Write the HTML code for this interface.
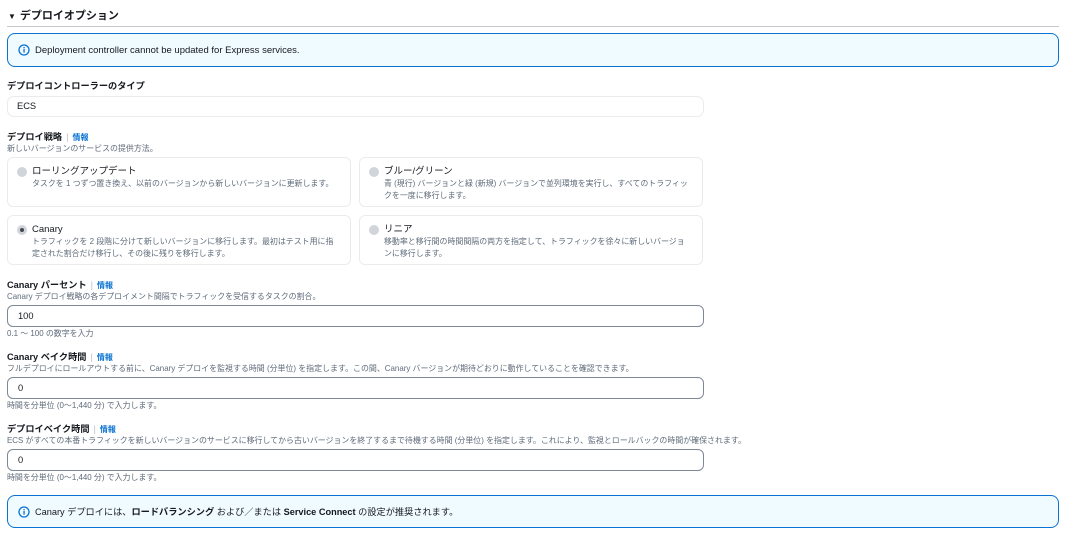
<!DOCTYPE html>
<html><head><meta charset="utf-8"><style>
*{box-sizing:border-box;margin:0;padding:0}
body{width:1070px;height:540px;background:#fff;font-family:"Liberation Sans","Noto Sans CJK JP",sans-serif;color:#16191f;position:relative;overflow:hidden}
.a{position:absolute;white-space:nowrap}
.h{font-size:11px;font-weight:bold;line-height:14px}
.lbl{font-size:9.2px;font-weight:bold;line-height:12px}
.info{color:#0972d3;font-weight:bold;font-size:8px}
.sep{color:#b6bec9;font-weight:normal;margin:0 4px}
.desc{font-size:7.95px;color:#5f6b7a;line-height:11px}
.info-box{position:absolute;left:7px;width:1052px;border:1px solid #0972d3;background:#f0fbff;border-radius:8px}
.card{position:absolute;border:1px solid #e9ebed;border-radius:6px;width:344px;height:50px}
.rad{position:absolute;left:9px;top:9px;width:10px;height:10px;border-radius:50%;background:#d1d5db}
.rad.on::after{content:"";position:absolute;left:3px;top:3px;width:4px;height:4px;border-radius:50%;background:#424650}
.ct{position:absolute;left:24px;top:8px;font-size:9.5px;line-height:12px}
.cd{position:absolute;left:24px;top:20px;font-size:7.95px;line-height:12px;color:#5f6b7a;width:306px;white-space:normal}
.inp{position:absolute;left:7px;width:697px;height:22px;border:1px solid #7d8998;border-radius:6px;font-size:9.3px;padding-left:10px;line-height:20px}
svg{position:absolute}
</style></head><body>
<div class="a h" style="left:8px;top:9px"><span style="font-size:8px;margin-right:4px">▼</span>デプロイオプション</div>
<div class="a" style="left:7px;top:26px;width:1052px;height:1px;background:#c6c6cd"></div>

<div class="info-box" style="top:33px;height:34px">
<svg style="left:10px;top:10px" width="12" height="12" viewBox="0 0 12 12"><circle cx="6" cy="6" r="5" fill="none" stroke="#0972d3" stroke-width="1.3"/><rect x="5.4" y="5" width="1.3" height="3.6" fill="#0972d3"/><rect x="5.4" y="3" width="1.3" height="1.3" fill="#0972d3"/></svg>
<div class="a" style="left:27px;top:11px;font-size:9.5px;line-height:12px">Deployment controller cannot be updated for Express services.</div>
</div>

<div class="a lbl" style="left:7px;top:80px">デプロイコントローラーのタイプ</div>
<div class="a" style="left:7px;top:96px;width:697px;height:21px;border:1px solid #e9ebed;border-radius:7px;font-size:9.3px;padding-left:9px;line-height:19px">ECS</div>

<div class="a lbl" style="left:7px;top:131px">デプロイ戦略<span class="sep">|</span><span class="info">情報</span></div>
<div class="a desc" style="left:7px;top:143px">新しいバージョンのサービスの提供方法。</div>

<div class="card" style="left:7px;top:157px"><div class="rad"></div><div class="ct">ローリングアップデート</div><div class="cd">タスクを 1 つずつ置き換え、以前のバージョンから新しいバージョンに更新します。</div></div>
<div class="card" style="left:359px;top:157px"><div class="rad"></div><div class="ct">ブルー/グリーン</div><div class="cd">青 (現行) バージョンと緑 (新規) バージョンで並列環境を実行し、すべてのトラフィックを一度に移行します。</div></div>
<div class="card" style="left:7px;top:215px"><div class="rad on"></div><div class="ct">Canary</div><div class="cd">トラフィックを 2 段階に分けて新しいバージョンに移行します。最初はテスト用に指定された割合だけ移行し、その後に残りを移行します。</div></div>
<div class="card" style="left:359px;top:215px"><div class="rad"></div><div class="ct">リニア</div><div class="cd">移動率と移行間の時間間隔の両方を指定して、トラフィックを徐々に新しいバージョンに移行します。</div></div>

<div class="a lbl" style="left:7px;top:279px">Canary パーセント<span class="sep">|</span><span class="info">情報</span></div>
<div class="a desc" style="left:7px;top:291px">Canary デプロイ戦略の各デプロイメント間隔でトラフィックを受信するタスクの割合。</div>
<div class="inp" style="top:305px">100</div>
<div class="a desc" style="left:7px;top:328px">0.1 ～ 100 の数字を入力</div>

<div class="a lbl" style="left:7px;top:351px">Canary ベイク時間<span class="sep">|</span><span class="info">情報</span></div>
<div class="a desc" style="left:7px;top:363px">フルデプロイにロールアウトする前に、Canary デプロイを監視する時間 (分単位) を指定します。この間、Canary バージョンが期待どおりに動作していることを確認できます。</div>
<div class="inp" style="top:377px">0</div>
<div class="a desc" style="left:7px;top:400px">時間を分単位 (0～1,440 分) で入力します。</div>

<div class="a lbl" style="left:7px;top:423px">デプロイベイク時間<span class="sep">|</span><span class="info">情報</span></div>
<div class="a desc" style="left:7px;top:435px">ECS がすべての本番トラフィックを新しいバージョンのサービスに移行してから古いバージョンを終了するまで待機する時間 (分単位) を指定します。これにより、監視とロールバックの時間が確保されます。</div>
<div class="inp" style="top:449px">0</div>
<div class="a desc" style="left:7px;top:472px">時間を分単位 (0～1,440 分) で入力します。</div>

<div class="info-box" style="top:495px;height:33px">
<svg style="left:10px;top:10px" width="12" height="12" viewBox="0 0 12 12"><circle cx="6" cy="6" r="5" fill="none" stroke="#0972d3" stroke-width="1.3"/><rect x="5.4" y="5" width="1.3" height="3.6" fill="#0972d3"/><rect x="5.4" y="3" width="1.3" height="1.3" fill="#0972d3"/></svg>
<div class="a" style="left:27px;top:10px;font-size:9.2px;line-height:12px">Canary デプロイには、<b>ロードバランシング</b> および／または <b>Service Connect</b> の設定が推奨されます。</div>
</div>
</body></html>
